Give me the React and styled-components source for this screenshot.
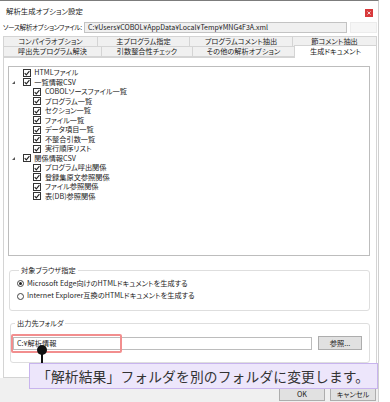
import React from 'react';
import styled, { createGlobalStyle } from 'styled-components';

const GlobalStyle = createGlobalStyle`
  html, body { margin: 0; padding: 0; background: #fff; }
  body { font-family: "Noto Sans CJK JP", "Noto Sans", sans-serif; color: #1e1e1e; }
  * { box-sizing: border-box; }
`;

const Page = styled.div`
  position: relative;
  width: 390px;
  height: 402px;
  overflow: hidden;
  background: #fff;
`;

const Dialog = styled.div`
  width: 379px;
  height: 402px;
  border-top: 1px solid #7c7c7c;
  border-right: 1px solid #cfcfcf;
  display: flex;
  flex-direction: column;
  background: #fff;
  font-size: 7.2px;
  line-height: 1;
  font-feature-settings: "palt";
`;

const TitleBar = styled.div`
  height: 20px;
  display: flex;
  align-items: center;
  justify-content: space-between;
  padding: 0 5px 0 6px;
`;

const Title = styled.span`
  font-size: 7.4px;
  color: #222;
`;

const CloseButton = styled.div`
  width: 8px;
  height: 8px;
  margin-top: 4px;
  background: #d8393b;
  display: flex;
  align-items: center;
  justify-content: center;
`;

const SourceRow = styled.div`
  height: 12px;
  display: flex;
  align-items: center;
  padding-left: 3px;
`;

const SourceLabel = styled.span`
  flex: none;
  width: 81px;
  white-space: nowrap;
  font-size: 6.7px;
  letter-spacing: -0.45px;
  color: #222;
`;

const PathBox = styled.div`
  flex: none;
  width: 263px;
  height: 11px;
  border: 1px solid #c3c3c3;
  background: #f0f0f0;
  padding-left: 3px;
  font-size: 7px;
  line-height: 9px;
  white-space: nowrap;
  color: #222;
`;

const FadedBox = styled.div`
  flex: none;
  width: 27px;
  height: 11px;
  margin-left: 3px;
  background: #f6f6f6;
  border: 1px solid #ececec;
`;

const Tabs = styled.div`
  margin: 3px 0 0 3px;
  width: 374px;
  display: flex;
  flex-direction: column;
`;

const TabRow = styled.div`
  display: flex;
  height: 11px;
  & + & { margin-top: -1px; }
`;

const Tab = styled.div`
  flex: none;
  width: ${(p) => p.$w}px;
  height: ${(p) => (p.$active ? 13 : 11)}px;
  margin-top: ${(p) => (p.$active ? -1 : 0)}px;
  border: 1px solid #d4d4d4;
  border-bottom: ${(p) => (p.$active ? 'none' : '1px solid #d4d4d4')};
  background: ${(p) => (p.$active ? '#fff' : '#f0f0f0')};
  display: flex;
  align-items: center;
  justify-content: center;
  white-space: nowrap;
  color: #222;
  position: relative;
  z-index: ${(p) => (p.$active ? 2 : 1)};
  & + & { margin-left: -1px; }
`;

const Panel = styled.div`
  position: relative;
  margin-left: 3px;
  width: 374px;
  height: 321px;
  flex: none;
  border: 1px solid #d4d4d4;
  background: #fff;
  padding: 8px 6px 0 4px;
  display: flex;
  flex-direction: column;
`;

const TreeBox = styled.div`
  height: 190px;
  flex: none;
  border: 1px solid #bdbdbd;
  padding-top: 1px;
`;

const TreeRow = styled.div`
  height: 9.5px;
  display: flex;
  align-items: center;
  padding-left: ${(p) => 1 + p.$level * 10.6}px;
`;

const ExpanderSlot = styled.div`
  flex: none;
  width: 12.7px;
  display: flex;
  align-items: center;
`;

const TreeLabel = styled.span`
  margin-left: 3.6px;
  white-space: nowrap;
  color: #1e1e1e;
`;

const Group = styled.fieldset`
  margin: ${(p) => p.$mt}px 0 0 ${(p) => p.$ml}px;
  padding: ${(p) => p.$pad};
  border: 1px solid #dedede;
  border-radius: 3px;
  min-width: 0;
`;

const Legend = styled.legend`
  padding: 0 2px;
  margin-left: 2px;
  line-height: 10px;
  font-size: 7.2px;
  color: #222;
`;

const RadioRow = styled.label`
  height: 12.7px;
  display: flex;
  align-items: center;
  gap: 3px;
  white-space: nowrap;
  color: #1e1e1e;
`;

const RadioCircle = styled.span`
  flex: none;
  width: 7px;
  height: 7px;
  border-radius: 50%;
  border: 1px solid #444;
  background: #fff;
  display: flex;
  align-items: center;
  justify-content: center;
  &::after {
    content: '';
    width: 3px;
    height: 3px;
    border-radius: 50%;
    background: ${(p) => (p.$checked ? '#222' : 'transparent')};
  }
`;

const FolderRow = styled.div`
  display: flex;
  align-items: center;
  gap: 6px;
`;

const FolderInput = styled.div`
  flex: none;
  width: 299px;
  height: 13px;
  border: 1px solid #bcbcbc;
  background: #fff;
  padding-left: 3px;
  line-height: 11px;
  white-space: nowrap;
  color: #1e1e1e;
`;

const PushButton = styled.div`
  flex: none;
  width: ${(p) => p.$w}px;
  height: ${(p) => p.$h}px;
  border: 1px solid #adadad;
  background: #e1e1e1;
  display: flex;
  align-items: center;
  justify-content: center;
  color: #222;
  white-space: nowrap;
`;

const Footer = styled.div`
  flex: 1;
  background: #f0f0f0;
  display: flex;
  justify-content: flex-end;
  align-items: flex-start;
  gap: 5px;
  padding: 10px 2px 0 0;
`;

const Highlight = styled.div`
  position: absolute;
  left: 11px;
  top: 334px;
  width: 111px;
  height: 19px;
  border: 2px solid #f28e8e;
  border-radius: 2px;
`;

const LeaderLine = styled.div`
  position: absolute;
  left: 41px;
  top: 350px;
  width: 2px;
  height: 14px;
  background: #111;
`;

const LeaderDot = styled.div`
  position: absolute;
  left: 37px;
  top: 345px;
  width: 10px;
  height: 10px;
  border-radius: 50%;
  background: #111;
`;

const Callout = styled.div`
  position: absolute;
  left: 29px;
  top: 363px;
  width: 349px;
  height: 26px;
  background: #ede6fb;
  border: 1px solid #c8b4ee;
  padding-left: 7px;
  font-family: "Noto Sans CJK JP", sans-serif;
  font-size: 13.75px;
  letter-spacing: 0.15px;
  line-height: 24px;
  color: #333;
  white-space: nowrap;
`;

const Check = () => (
  <svg width="8" height="8" viewBox="0 0 8 8" style={{ flex: 'none', display: 'block' }}>
    <rect x="0.5" y="0.5" width="7" height="7" fill="#fff" stroke="#333" />
    <path d="M1.7 4.1 L3.3 5.8 L6.4 2.1" fill="none" stroke="#222" strokeWidth="1.1" />
  </svg>
);

const Expander = () => (
  <svg width="5" height="5" viewBox="0 0 5 5" style={{ display: 'block', marginLeft: 1 }}>
    <polygon points="4,1 4,4 1,4" fill="#555" />
  </svg>
);

const treeItems = [
  { level: 0, label: 'HTMLファイル' },
  { level: 0, label: '一覧情報CSV', exp: true },
  { level: 1, label: 'COBOLソースファイル一覧' },
  { level: 1, label: 'プログラム一覧' },
  { level: 1, label: 'セクション一覧' },
  { level: 1, label: 'ファイル一覧' },
  { level: 1, label: 'データ項目一覧' },
  { level: 1, label: '不整合引数一覧' },
  { level: 1, label: '実行順序リスト' },
  { level: 0, label: '関係情報CSV', exp: true },
  { level: 1, label: 'プログラム呼出関係' },
  { level: 1, label: '登録集原文参照関係' },
  { level: 1, label: 'ファイル参照関係' },
  { level: 1, label: '表(DB)参照関係' },
];

const tabRow1 = [
  { label: 'コンパイラオプション', w: 95 },
  { label: '主プログラム指定', w: 93 },
  { label: 'プログラムコメント抽出', w: 104 },
  { label: '節コメント抽出', w: 85 },
];

const tabRow2 = [
  { label: '呼出先プログラム解決', w: 99 },
  { label: '引数整合性チェック', w: 92 },
  { label: 'その他の解析オプション', w: 103 },
  { label: '生成ドキュメント', w: 83, active: true },
];

export default function App() {
  return (
    <Page>
      <GlobalStyle />
      <Dialog>
        <TitleBar>
          <Title>解析生成オプション設定</Title>
          <CloseButton>
            <svg width="4" height="4" viewBox="0 0 4 4" style={{ display: 'block' }}>
              <path d="M0.5 0.5 L3.5 3.5 M3.5 0.5 L0.5 3.5" stroke="#fff" strokeWidth="0.8" />
            </svg>
          </CloseButton>
        </TitleBar>
        <SourceRow>
          <SourceLabel>ソース解析オプションファイル:</SourceLabel>
          <PathBox>C:¥Users¥COBOL¥AppData¥Local¥Temp¥MNG4F3A.xml</PathBox>
          <FadedBox />
        </SourceRow>
        <Tabs>
          <TabRow>
            {tabRow1.map((t) => (
              <Tab key={t.label} $w={t.w}>{t.label}</Tab>
            ))}
          </TabRow>
          <TabRow>
            {tabRow2.map((t) => (
              <Tab key={t.label} $w={t.w} $active={t.active}>{t.label}</Tab>
            ))}
          </TabRow>
        </Tabs>
        <Panel>
          <TreeBox>
            {treeItems.map((it) => (
              <TreeRow key={it.label} $level={it.level}>
                <ExpanderSlot>{it.exp ? <Expander /> : null}</ExpanderSlot>
                <Check />
                <TreeLabel>{it.label}</TreeLabel>
              </TreeRow>
            ))}
          </TreeBox>
          <Group $mt={9} $ml={1} $pad="2px 0 8px 7px">
            <Legend>対象ブラウザ指定</Legend>
            <RadioRow>
              <RadioCircle $checked />
              Microsoft Edge向けのHTMLドキュメントを生成する
            </RadioRow>
            <RadioRow>
              <RadioCircle />
              Internet Explorer互換のHTMLドキュメントを生成する
            </RadioRow>
          </Group>
          <Group $mt={7} $ml={2} $pad="8px 0 12px 2px">
            <Legend>出力先フォルダ</Legend>
            <FolderRow>
              <FolderInput>C:¥解析情報</FolderInput>
              <PushButton $w={44} $h={14}>参照...</PushButton>
            </FolderRow>
          </Group>
        </Panel>
        <Footer>
          <PushButton $w={46} $h={13}>OK</PushButton>
          <PushButton $w={46} $h={13}>キャンセル</PushButton>
        </Footer>
      </Dialog>
      <Highlight />
      <LeaderLine />
      <LeaderDot />
      <Callout>「解析結果」フォルダを別のフォルダに変更します。</Callout>
    </Page>
  );
}
